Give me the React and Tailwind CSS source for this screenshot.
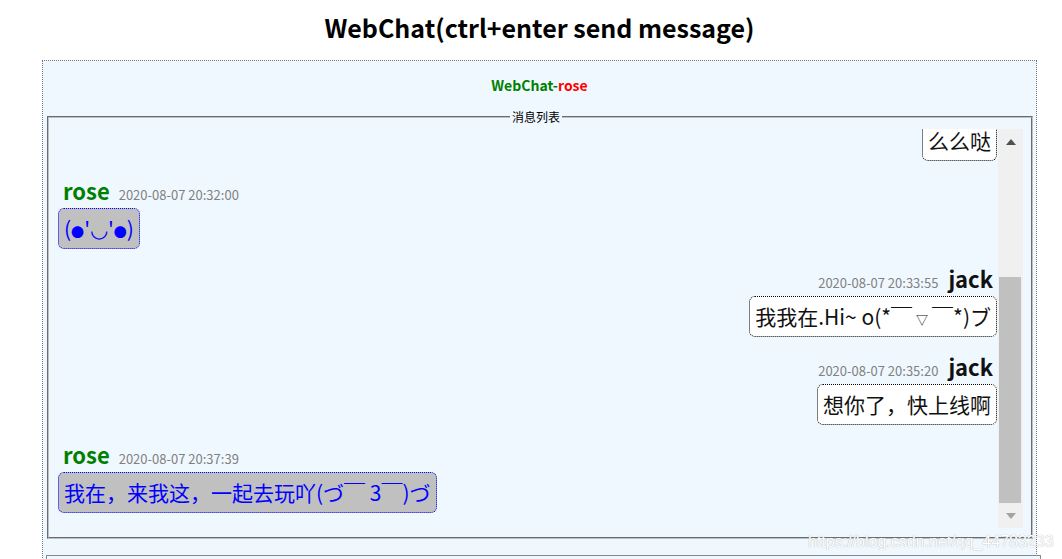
const font = { fontFamily: '"Noto Sans CJK SC", sans-serif' };

const dot = <span className="text-[13px]">●</span>;
const tri = <span className="px-[4px] text-[12px]">▽</span>;

const messages = [
  { user: "rose", time: "2020-08-07 20:32:00", text: <>({dot}'◡'{dot})</> },
  { user: "jack", time: "2020-08-07 20:33:55", text: <>我我在.Hi~ o(*￣{tri}￣*)ブ</> },
  { user: "jack", time: "2020-08-07 20:35:20", text: "想你了，快上线啊" },
  { user: "rose", time: "2020-08-07 20:37:39", text: "我在，来我这，一起去玩吖(づ￣ 3￣)づ" },
];

function Bubble({ mine, children }) {
  return (
    <div
      className={
        mine
          ? "h-[41px] rounded-[6px] border border-dotted border-[#0000ff] bg-[#c0c0c0] px-[5px] py-[5px] text-[21px] leading-[29px] text-[#0000ff] whitespace-nowrap"
          : "h-[41px] rounded-[6px] border border-dotted border-black bg-white px-[5px] py-[5px] text-[21px] leading-[29px] text-[#111] whitespace-nowrap"
      }
    >
      {children}
    </div>
  );
}

function Message({ user, time, text }) {
  const mine = user === "rose";
  return (
    <div className={mine ? "mt-[15px] flex flex-col items-start" : "mt-[15px] flex flex-col items-end"}>
      {mine ? (
        <div className="flex h-[28px] items-baseline gap-[9px] pl-[14px]">
          <span className="text-[22px] font-bold leading-[28px] text-[#008000]">{user}</span>
          <span className="text-[13px] text-[#808080]">{time}</span>
        </div>
      ) : (
        <div className="flex h-[28px] items-baseline gap-[10px] pr-[5px]">
          <span className="text-[13px] text-[#808080]">{time}</span>
          <span className="text-[22px] font-bold leading-[28px] text-[#111]">{user}</span>
        </div>
      )}
      <div className={mine ? "mt-[4px] ml-[9px]" : "mt-[4px] mr-[1px]"}>
        <Bubble mine={mine}>{text}</Bubble>
      </div>
    </div>
  );
}

function ScrollBar() {
  return (
    <div className="flex h-[399px] w-[25px] shrink-0 flex-col bg-[#f0f0f0]">
      <div className="flex h-[25px] items-center justify-center">
        <svg width="10" height="6" viewBox="0 0 10 6">
          <path d="M0 6 L5 0 L10 6 Z" fill="#505050" />
        </svg>
      </div>
      <div className="flex-1 px-[1px]">
        <div className="mt-[123px] h-[226px] w-[22px] bg-[#c0c0c0]" />
      </div>
      <div className="flex h-[25px] items-center justify-center">
        <svg width="10" height="6" viewBox="0 0 10 6">
          <path d="M0 0 L5 6 L10 0 Z" fill="#a3a3a3" />
        </svg>
      </div>
    </div>
  );
}

export default function App() {
  return (
    <div className="relative h-[559px] overflow-hidden bg-white" style={font}>
      <div className="ml-[42px] w-[995px]">
        <h1 className="pt-[11px] pb-[17px] text-center text-[25px] font-bold leading-[32px] text-black">
          WebChat(ctrl+enter send message)
        </h1>
        <div className="border border-dotted border-[#777] bg-[#f0f8ff] px-[4px]">
          <div className="flex h-[48px] items-center justify-center text-[14px] font-bold">
            <span className="text-[#008000]">WebChat-</span>
            <span className="text-[#ff0000]">rose</span>
          </div>
          <fieldset className="w-[986px] border-2 border-[#c0c0c0] [border-style:groove] pt-[4px] pr-[8px] pb-[9px]">
            <legend className="mx-auto px-[2px] text-[12px] leading-[16px] text-black">消息列表</legend>
            <div className="flex h-[399px]">
              <div className="flex flex-1 flex-col overflow-hidden">
                <div className="-mt-[9px] mr-[1px] self-end">
                  <Bubble>么么哒</Bubble>
                </div>
                {messages.map((m, i) => (
                  <Message key={i} {...m} />
                ))}
              </div>
              <ScrollBar />
            </div>
          </fieldset>
          <div className="h-[16px]" />
          <div className="-ml-[1px] h-[40px] w-[995px] border border-[#888] bg-[#f0f8ff]" />
        </div>
      </div>
      <div
        className="absolute left-[808px] top-[530px] text-[16px] text-white [text-shadow:0_0_1px_#999]"
        style={{ fontFamily: '"Liberation Sans", sans-serif' }}
      >
        https://blog.csdn.net/qq_44783233
      </div>
    </div>
  );
}
